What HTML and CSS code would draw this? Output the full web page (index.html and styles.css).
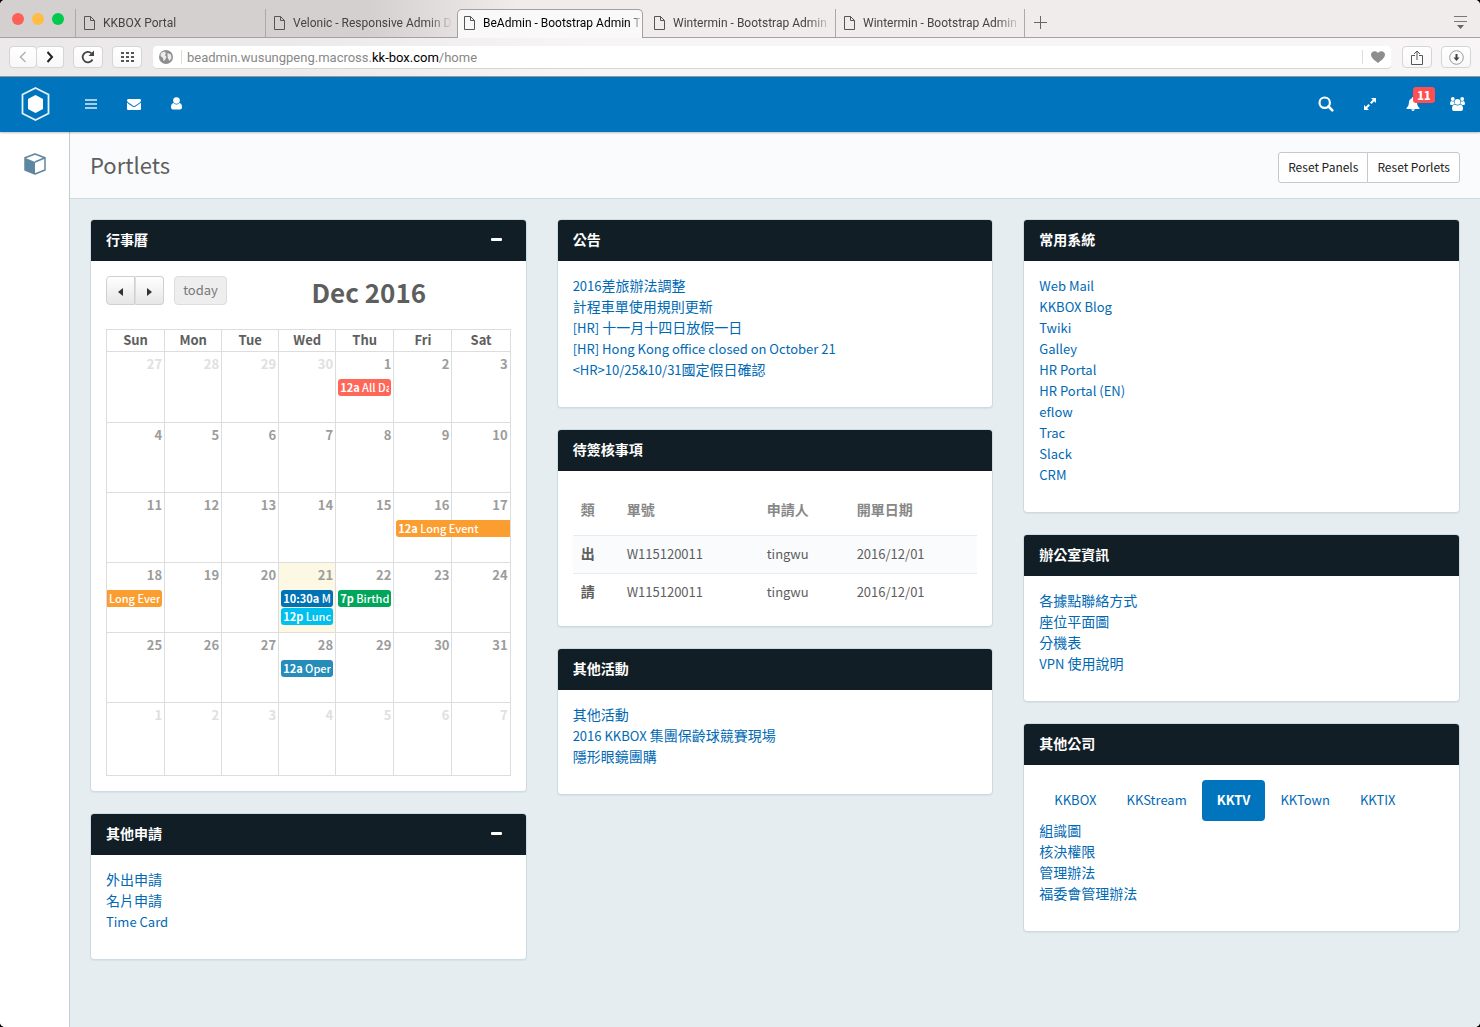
FILE: index.html
```html
<!DOCTYPE html>
<html lang="zh-Hant">
<head>
<meta charset="utf-8">
<meta name="viewport" content="width=device-width, initial-scale=1">
<title>BeAdmin - Bootstrap Admin</title>
<link rel="stylesheet" href="styles.css">
</head>
<body>
<svg class="defs" aria-hidden="true">
  <symbol id="file" viewBox="0 0 11 14"><path d="M.5.5H6.500L10.500 4.500V13.500H.5Z M6.500.5V4.500H10.500" fill="none" stroke="currentColor"/></symbol>
</svg>
<div class="window">
  <div class="tabbar">
    <div class="lights"><i class="red"></i><i class="amber"></i><i class="green"></i></div>
    <nav class="tabs" aria-label="Tabs">
      <a class="tab" href="#"><svg><use href="#file"/></svg><span>KKBOX Portal</span></a>
      <a class="tab" href="#"><svg><use href="#file"/></svg><span>Velonic - Responsive Admin D</span></a>
      <a class="tab active" href="#"><svg><use href="#file"/></svg><span>BeAdmin - Bootstrap Admin T</span></a>
      <a class="tab" href="#"><svg><use href="#file"/></svg><span>Wintermin - Bootstrap Admin</span></a>
      <a class="tab" href="#"><svg><use href="#file"/></svg><span>Wintermin - Bootstrap Admin</span></a>
    </nav>
    <button class="bare newtab" aria-label="New tab"><svg width="13" height="13" viewBox="0 0 13 13"><path d="M6.500 0V13M0 6.500H13" stroke="#666"/></svg></button>
    <button class="bare tabmenu" aria-label="Tab menu"><svg width="13" height="13" viewBox="0 0 13 13"><path d="M0 .5H13M0 5.500H13" stroke="#777"/><path d="M3 9H10L6.500 13Z" fill="#666"/></svg></button>
  </div>
  <div class="toolbar">
    <div class="pair">
      <button class="tool" aria-label="Back"><svg width="8" height="12" viewBox="0 0 8 12"><path d="M6.500 1L1.500 6L6.500 11" fill="none" stroke="#b5b5b5" stroke-width="1.600"/></svg></button>
      <button class="tool" aria-label="Forward"><svg width="8" height="12" viewBox="0 0 8 12"><path d="M1.500 1L6 6L1.500 11" fill="none" stroke="#222" stroke-width="2"/></svg></button>
    </div>
    <button class="tool wide" aria-label="Reload"><svg width="14" height="14" viewBox="0 0 14 14"><path d="M11.500 9.500A5.200 5.200 0 1 1 10.500 3.400" fill="none" stroke="#444" stroke-width="1.800"/><path d="M13 .5V6H7.500Z" fill="#444"/></svg></button>
    <button class="tool wide" aria-label="Speed dial"><svg width="13" height="10" viewBox="0 0 13 10"><path d="M0 1H13M0 5H13M0 9H13" stroke="#555" stroke-width="2" stroke-dasharray="3 2"/></svg></button>
    <div class="address">
      <svg width="14" height="14" viewBox="0 0 14 14"><circle cx="7" cy="7" r="7" fill="#8e8e8e"/><path d="M2 3L5.500 1.500L7 3L6 5L7.500 7L6 10L4.500 11L4 8L1.500 6Z M8.500 3L12 4.500L12.500 8L10.500 11L9 8.500L8.500 6Z" fill="#ececec"/></svg>
      <label class="url"><input type="text" aria-label="Address"><span class="url-text">beadmin.wusungpeng.macross.<b>kk-box.com</b>/home</span></label>
      <button class="bare heart" aria-label="Bookmark"><svg width="14" height="12" viewBox="0 0 14 12"><path d="M7 12C4 9.500 0 7 0 3.500C0 0 5 -1.200 7 2C9 -1.200 14 0 14 3.500C14 7 10 9.500 7 12Z" fill="#8e8e8e"/></svg></button>
    </div>
    <button class="tool wide" aria-label="Share"><svg width="12" height="15" viewBox="0 0 12 15"><path d="M4 5.500H.5V14.500H11.500V5.500H8M6 10V1M3 4L6 1L9 4" fill="none" stroke="#555"/></svg></button>
    <button class="tool wide" aria-label="Downloads"><svg width="15" height="15" viewBox="0 0 15 15"><circle cx="7.500" cy="7.500" r="6.800" fill="none" stroke="#999"/><path d="M6.500 4H8.500V7.500H10.500L7.500 11L4.500 7.500H6.500Z" fill="#444"/></svg></button>
  </div>

  <header class="navbar">
    <a class="brand" href="#" aria-label="BeAdmin"><svg width="29" height="34" viewBox="0 0 29 34"><path d="M14.500 1L27.500 7.500V26.500L14.500 33L1.500 26.500V7.500Z" fill="none" stroke="#fff" stroke-opacity=".9" stroke-width="1.800"/><path d="M14.500 8L22 12V22L14.500 26L7 22V12Z" fill="#fff"/></svg></a>
    <button class="bare menu" aria-label="Menu"><svg width="12" height="10" viewBox="0 0 12 10"><path d="M0 1H12M0 5H12M0 9H12" stroke="#fff" stroke-opacity=".65" stroke-width="2"/></svg></button>
    <button class="bare mail" aria-label="Mail"><svg width="14" height="14" viewBox="0 0 1792 1792"><path fill="#fff" d="M1792 710v794q0 66-47 113t-113 47h-1472q-66 0-113-47t-47-113v-794q44 49 101 87 362 246 497 345 57 42 92.500 65.500t94.500 48 110 24.500h2q51 0 110-24.500t94.500-48 92.500-65.500q170-123 498-345 57-39 100-87zm0-294q0 79-49 151t-122 123q-376 261-468 325-10 7-42.500 31t-54 38.500-52 32.500-57.500 27-50 9h-2q-23 0-50-9t-57.500-27-52-32.500-54-38.500-42.500-31q-91-64-262-182.500t-205-142.500q-62-42-117-115.500t-55-136.500q0-78 41.500-130t118.500-52h1472q65 0 112.500 47t47.500 113z"/></svg></button>
    <button class="bare" aria-label="Profile"><svg width="11" height="13" viewBox="0 0 11 13"><circle cx="5.500" cy="3.500" r="3.300" fill="#fff"/><path d="M2.600 6Q4 7.500 5.500 7.500T8.400 6Q11 6.500 11 10.300Q11 12.500 9 12.500H2Q0 12.500 0 10.300Q0 6.500 2.600 6Z" fill="#fff"/></svg></button>
    <div class="actions">
      <button class="bare" aria-label="Search"><svg width="16" height="16" viewBox="0 0 16 16"><circle cx="6.700" cy="6.700" r="5.200" fill="none" stroke="#fff" stroke-width="2.200"/><path d="M10.500 10.500L14.300 14.300" stroke="#fff" stroke-width="2.600" stroke-linecap="round"/></svg></button>
      <button class="bare" aria-label="Full screen"><svg width="12" height="12" viewBox="0 0 12 12"><path d="M7 0H12V5L10.200 3.200L7.500 6L6 4.500L8.800 1.800ZM5 12H0V7L1.800 8.800L4.500 6L6 7.500L3.200 10.200Z" fill="#fff"/></svg></button>
      <button class="bare bell" aria-label="Notifications"><svg width="14" height="14" viewBox="0 0 14 14"><path d="M7 0C7.700 0 8 .5 7.900 1.200C10.500 1.800 11 4 11.100 6C11.300 8.500 12.200 9.700 13.500 11V12H.5V11C1.800 9.700 2.700 8.500 2.900 6C3 4 3.500 1.800 6.100 1.200C6 .5 6.300 0 7 0ZM5.200 12.200H8.800Q8.600 14 7 14T5.200 12.200Z" fill="#fff"/></svg><span class="badge">11</span></button>
      <button class="bare" aria-label="Users"><svg width="15" height="14" viewBox="0 0 15 14"><g fill="#fff"><circle cx="2.800" cy="2" r="1.900"/><circle cx="12.200" cy="2" r="1.900"/><circle cx="7.500" cy="4.800" r="2.900"/><path d="M1.300 4.100Q2.800 5 4.100 4.200Q3.900 6 4.800 7Q3.500 7 2.800 8H1.500Q0 8 0 6.800Q0 4.500 1.300 4.100ZM13.700 4.100Q12.200 5 10.900 4.200Q11.100 6 10.200 7Q11.500 7 12.200 8H13.500Q15 8 15 6.800Q15 4.500 13.700 4.100ZM4.800 7.400Q7.500 9.400 10.200 7.400Q13 7.800 13 11.700Q13 14 11 14H4Q2 14 2 11.700Q2 7.800 4.800 7.400Z"/></g></svg></button>
    </div>
  </header>

  <div class="shell">
    <aside class="sidebar"><a href="#" aria-label="Portlets"><svg width="22" height="22" viewBox="0 0 22 22"><path d="M11 1L21 4.700V17L11 21L1 17V4.700Z" fill="#fff" stroke="#5f86a0" stroke-width="1.500" stroke-linejoin="round"/><path d="M1 4.700L11 9V21L1 17Z" fill="#5f86a0"/><path d="M11 9L21 4.700" stroke="#5f86a0" stroke-width="1.500"/></svg></a></aside>
    <main class="main">
      <div class="page-head">
        <h1>Portlets</h1>
        <div class="btn-group"><button>Reset Panels</button><button>Reset Porlets</button></div>
      </div>
      <div class="columns">
        <div class="column">
          <section class="panel">
            <div class="panel-head"><h2>行事曆</h2><button class="bare collapse" aria-label="Collapse"></button></div>
            <div class="panel-body">
              <div class="cal-head">
                <div class="cal-pair"><button aria-label="Previous"><svg width="5" height="8" viewBox="0 0 5 8"><path d="M5 0V8L0 4Z" fill="#333"/></svg></button><button aria-label="Next"><svg width="5" height="8" viewBox="0 0 5 8"><path d="M0 0V8L5 4Z" fill="#333"/></svg></button></div>
                <button class="today-btn" disabled>today</button>
                <h3>Dec 2016</h3>
              </div>
              <table class="cal">
                <thead><tr><th>Sun</th><th class="slim">Mon</th><th class="slim">Tue</th><th class="slim">Wed</th><th>Thu</th><th>Fri</th><th>Sat</th></tr></thead>
                <tbody>
                  <tr><td class="other">27</td><td class="other">28</td><td class="other">29</td><td class="other">30</td><td>1<a class="event coral" href="#"><b>12a</b> All Day</a></td><td>2</td><td>3</td></tr>
                  <tr><td>4</td><td>5</td><td>6</td><td>7</td><td>8</td><td>9</td><td>10</td></tr>
                  <tr><td>11</td><td>12</td><td>13</td><td>14</td><td>15</td><td>16<a class="event orange span-start" href="#"><b>12a</b> Long Event</a></td><td>17</td></tr>
                  <tr><td>18<a class="event orange span-end" href="#">Long Event</a></td><td>19</td><td>20</td><td class="now">21<a class="event blue" href="#"><b>10:30a</b> Me</a><a class="event cyan" href="#"><b>12p</b> Lunch</a></td><td>22<a class="event green" href="#"><b>7p</b> Birthda</a></td><td>23</td><td>24</td></tr>
                  <tr><td>25</td><td>26</td><td>27</td><td>28<a class="event steel" href="#"><b>12a</b> Open</a></td><td>29</td><td>30</td><td>31</td></tr>
                  <tr><td class="other">1</td><td class="other">2</td><td class="other">3</td><td class="other">4</td><td class="other">5</td><td class="other">6</td><td class="other">7</td></tr>
                </tbody>
              </table>
            </div>
          </section>
          <section class="panel">
            <div class="panel-head"><h2>其他申請</h2><button class="bare collapse" aria-label="Collapse"></button></div>
            <div class="panel-body"><ul class="links"><li><a href="#">外出申請</a></li><li><a href="#">名片申請</a></li><li class="latin"><a href="#">Time Card</a></li></ul></div>
          </section>
        </div>
        <div class="column">
          <section class="panel">
            <div class="panel-head"><h2>公告</h2></div>
            <div class="panel-body"><ul class="links"><li><a href="#"><span class="latin">2016</span>差旅辦法調整</a></li><li><a href="#">計程車單使用規則更新</a></li><li><a href="#"><span class="latin">[HR]</span> 十一月十四日放假一日</a></li><li class="latin"><a href="#">[HR] Hong Kong office closed on October 21</a></li><li><a href="#"><span class="latin">&lt;HR&gt;10/25&amp;10/31</span>國定假日確認</a></li></ul></div>
          </section>
          <section class="panel">
            <div class="panel-head"><h2>待簽核事項</h2></div>
            <div class="panel-body">
              <table class="data">
                <colgroup><col class="c1"><col class="c2"><col class="c3"><col></colgroup>
                <thead><tr><th>類</th><th>單號</th><th>申請人</th><th>開單日期</th></tr></thead>
                <tbody>
                  <tr><th>出</th><td>W115120011</td><td>tingwu</td><td>2016/12/01</td></tr>
                  <tr><th>請</th><td>W115120011</td><td>tingwu</td><td>2016/12/01</td></tr>
                </tbody>
              </table>
            </div>
          </section>
          <section class="panel">
            <div class="panel-head"><h2>其他活動</h2></div>
            <div class="panel-body"><ul class="links"><li><a href="#">其他活動</a></li><li><a href="#"><span class="latin">2016 KKBOX</span> 集團保齡球競賽現場</a></li><li><a href="#">隱形眼鏡團購</a></li></ul></div>
          </section>
        </div>
        <div class="column">
          <section class="panel">
            <div class="panel-head"><h2>常用系統</h2></div>
            <div class="panel-body"><ul class="links latin"><li><a href="#">Web Mail</a></li><li><a href="#">KKBOX Blog</a></li><li><a href="#">Twiki</a></li><li><a href="#">Galley</a></li><li><a href="#">HR Portal</a></li><li><a href="#">HR Portal (EN)</a></li><li><a href="#">eflow</a></li><li><a href="#">Trac</a></li><li><a href="#">Slack</a></li><li><a href="#">CRM</a></li></ul></div>
          </section>
          <section class="panel">
            <div class="panel-head"><h2>辦公室資訊</h2></div>
            <div class="panel-body"><ul class="links"><li><a href="#">各據點聯絡方式</a></li><li><a href="#">座位平面圖</a></li><li><a href="#">分機表</a></li><li><a href="#"><span class="latin">VPN</span> 使用說明</a></li></ul></div>
          </section>
          <section class="panel">
            <div class="panel-head"><h2>其他公司</h2></div>
            <div class="panel-body">
              <nav class="pills"><a href="#">KKBOX</a><a href="#">KKStream</a><a class="active" href="#">KKTV</a><a href="#">KKTown</a><a href="#">KKTIX</a></nav>
              <ul class="links"><li><a href="#">組識圖</a></li><li><a href="#">核決權限</a></li><li><a href="#">管理辦法</a></li><li><a href="#">福委會管理辦法</a></li></ul>
            </div>
          </section>
        </div>
      </div>
    </main>
  </div>
</div>
</body>
</html>
```
FILE: styles.css
```css
* { box-sizing: border-box; }
body { margin: 0; background: #000; color: #5e5e5e; font: 14px/21px "Noto Sans CJK TC", sans-serif; }
a { color: #0069b4; text-decoration: none; }
button, input { font: inherit; margin: 0; }
h1, h2, h3, ul { margin: 0; padding: 0; }
svg { display: block; flex: none; }
.defs { position: absolute; width: 0; height: 0; }
.bare { border: 0; padding: 0; background: none; }
.window { display: flex; flex-direction: column; min-height: 100vh; border-radius: 5px; overflow: hidden; background: #fff; }

/* browser tabs */
.tabbar { display: flex; height: 38px; font: 12px/16px Roboto, sans-serif; background: linear-gradient(90deg, #d4d0cf 0, #d4d0cf 25%, #f0eceb 35%, #f0eceb 100%); box-shadow: inset 0 -1px #a3a1a1; }
.lights { display: flex; gap: 8px; width: 75px; padding: 13px 0 0 12px; }
.lights i { width: 12px; height: 12px; border-radius: 50%; }
.red { background: #ff5f57; }
.amber { background: #ffbd45; }
.tabs { display: flex; }
.tab { display: flex; align-items: center; gap: 8px; width: 190px; height: 28px; margin-top: 9px; padding-left: 8px; color: #444; border-left: 1px solid #aaa; overflow: hidden; }
.tab svg { width: 11px; height: 14px; color: #555; }
.tab span { white-space: nowrap; overflow: hidden; flex: 1; margin-right: 2px; -webkit-mask-image: linear-gradient(90deg, #000 84%, transparent); mask-image: linear-gradient(90deg, #000 84%, transparent); }
.tab.active { color: #000; height: 29px; margin: 9px 2px 0; width: 186px; padding: 0 0 2px 6px; background: #faf9f9; border: 1px solid #a3a1a1; border-bottom: 0; border-radius: 5px 5px 0 0; }
.tab.active span { margin-right: 0; -webkit-mask-image: linear-gradient(90deg, #000 92%, transparent); mask-image: linear-gradient(90deg, #000 92%, transparent); }
.tab.active + .tab { border-left-color: transparent; }
.tab:last-child { border-right: 1px solid #aaa; }
.newtab { padding: 6px 9px 0; }
.tabmenu { margin-left: auto; padding: 7px 13px 0; }

/* browser toolbar */
.toolbar { display: flex; align-items: center; gap: 9px; height: 39px; padding: 0 9px; background: linear-gradient(90deg, #ebe9e9 0, #ebe9e9 20%, #f7f5f5 40%); border-bottom: 1px solid #999; }
.pair { display: flex; }
.tool { display: flex; align-items: center; justify-content: center; width: 28px; height: 22px; padding: 0; background: linear-gradient(#fff, #f8f8f8); border: 1px solid #d6d4d4; border-radius: 4px; }
.pair .tool:last-child { width: 27px; border-left: 0; }
.tool.wide { width: 30px; }
.address { display: flex; flex: 1; align-items: center; gap: 8px; height: 22px; margin: 0 2px; padding: 0 6px; background: #fff; border-radius: 4px; box-shadow: 0 1px #d8d6d6; }
.url { position: relative; flex: 1; height: 14px; border-left: 1px solid #ddd; border-right: 1px solid #ddd; color: #888; font: 13px/16px Roboto, sans-serif; }
.url input { display: block; width: 100%; height: 14px; border: 0; padding: 0 6px; background: none; }
.url-text { position: absolute; left: 5px; top: 0; }
.url b { color: #000; font-weight: 400; }

/* app bar */
.navbar { display: flex; align-items: center; height: 55px; padding: 0 15px 2px 21px; background: #0075bd; position: relative; box-shadow: 0 1px 2px rgba(0, 0, 0, .25); }
.brand { margin-right: 35px; }
.menu { margin-right: 30px; }
.mail { margin-right: 30px; }
.actions { display: flex; align-items: center; gap: 30px; margin-left: auto; }
.bell { position: relative; }
.badge { position: absolute; left: 7px; top: -10px; width: 22px; height: 16px; border-radius: 3px; background: #ff4f55; color: #fff; font-size: 11px; font-weight: 900; line-height: 16px; text-align: center; }

.shell { display: flex; flex: 1; }
.sidebar { width: 70px; padding: 21px 24px; border-right: 1px solid #c5ccd0; background: #fff; }
.main { flex: 1; min-width: 0; background: #e5edf0; }
.page-head { display: flex; align-items: flex-start; justify-content: space-between; height: 67px; padding: 0 20px; background: #fafbfd; border-bottom: 1px solid #ccdbe3; }
h1 { margin-top: 17px; font-size: 22px; font-weight: 400; line-height: 30px; }
.btn-group { display: flex; margin-top: 20px; }
.btn-group button { height: 31px; padding: 0 9px 2px; border: 1px solid #c6c8ca; border-radius: 3px 0 0 3px; background: #fff; color: #222; font-size: 12px; }
.btn-group button + button { margin-left: -1px; border-radius: 0 3px 3px 0; }

.columns { display: grid; grid-template-columns: repeat(3, minmax(0, 1fr)); gap: 30px; padding: 20px; }
.column { display: flex; flex-direction: column; gap: 21px; }
.panel { border: 1px solid #ccdbe3; border-radius: 4px; background: #fff; overflow: hidden; box-shadow: 0 1px 1px rgba(0, 0, 0, .05); }
.panel-head { display: flex; align-items: center; justify-content: space-between; height: 41px; padding: 0 24px 2px 15px; background: #121e26; color: #fff; }
h2 { font-size: 14px; font-weight: 700; line-height: 21px; }
.collapse { width: 11px; height: 3px; border-radius: 1px; background: #fff; }
.panel-body { padding: 15px; }
.links { list-style: none; margin-top: -1px; padding-bottom: 12px; }
.links li { height: 21px; }
.latin, .pills { font-size: 13px; }

/* calendar */
.cal-head { display: flex; height: 53px; align-items: flex-start; }
.cal-pair { display: flex; margin-right: 10px; }
.cal-head button { height: 29px; border: 1px solid #d0d0d0; border-radius: 4px; background: linear-gradient(#fff, #e6e6e6); }
.cal-pair button { display: flex; align-items: center; justify-content: center; width: 29px; padding: 3px 0 0; }
.cal-pair button:first-child { border-radius: 4px 0 0 4px; }
.cal-pair button:last-child { border-left-color: #ddd; border-radius: 0 4px 4px 0; }
.cal-head .today-btn { width: 53px; padding: 0 0 2px; background: #eee; border-color: #ddd; color: #777; font-size: 13px; }
h3 { flex: 1; font-size: 26px; font-weight: 700; line-height: 32px; text-align: center; }
.cal { width: 100%; table-layout: fixed; border-collapse: collapse; }
.cal th, .cal td { border: 1px solid #ddd; padding: 0; }
.cal th { height: 22px; font-size: 13px; line-height: 18px; padding-bottom: 2px; }
.cal .slim { width: 57px; }
.cal td { height: 70px; padding: 3px 2px 0; font-size: 13px; font-weight: 700; line-height: 18px; text-align: right; vertical-align: top; color: #9c9c9c; }
.cal tbody tr:first-child td { height: 71px; }
.cal tbody tr:last-child td { height: 73px; }
.cal .other { color: #e0e0e0; }
.cal .now { background: #fcf8e3; }
.event { display: block; height: 17px; margin: 6px 0 1px; border: solid transparent; border-width: 0 2px; border-radius: 3px; background-origin: border-box; color: #fff; font-size: 11px; font-weight: 500; line-height: 17px; text-align: left; white-space: nowrap; overflow: hidden; }
.event + .event { margin-top: 0; }
.coral { background-color: #ff6759; }
.orange { background-color: #fc9d30; }
.blue { background-color: #0073b7; }
.cyan { background-color: #00c0ef; }
.green { background-color: #00a65a; }
.steel { background-color: #268dbb; }
.lights .green { background: #00ca4e; }
.span-start { position: relative; width: calc(200% + 7px); border-radius: 3px 0 0 3px; }
.span-end { margin-left: -2px; border-radius: 0 3px 3px 0; }

/* approvals */
.data { width: 100%; table-layout: fixed; border-collapse: collapse; }
.data .c1 { width: 46px; }
.data .c2 { width: 140px; }
.data .c3 { width: 90px; }
.data th, .data td { height: 38px; padding: 0 8px 2px; text-align: left; border-top: 1px solid #e7ebee; }
.data td { font-size: 13px; }
.data thead th { height: 49px; border: 0; color: #888; }
.data tbody tr:first-child { background: #fafbfd; }

.pills { display: flex; }
.pills a { padding: 9px 15px 11px; border-radius: 4px; }
.pills .active { background: #0075bd; color: #fff; font-weight: 700; }
```
